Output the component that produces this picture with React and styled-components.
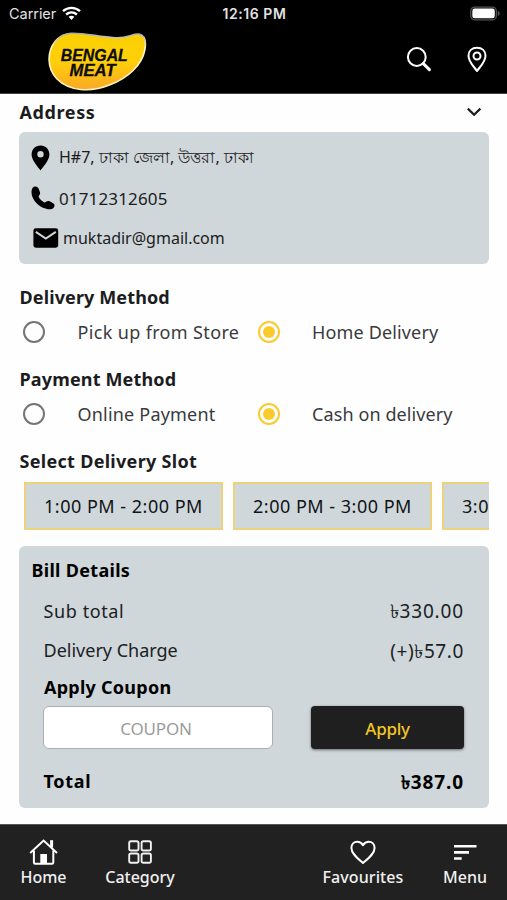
import React, { useState } from 'react';
import styled, { createGlobalStyle } from 'styled-components';

const GlobalStyle = createGlobalStyle`
  * { box-sizing: border-box; }
  body { margin: 0; background: #fff; }
  button, input { font-family: inherit; }
`;

const Screen = styled.div`
  display: flex;
  flex-direction: column;
  width: 100%;
  height: 100vh;
  overflow: hidden;
  background: #fefefe;
  color: #1c1c1e;
  font-family: 'Noto Sans', 'Open Sans', sans-serif;
  font-size: 18px;
`;

const StatusBar = styled.div`
  display: grid;
  grid-template-columns: 1fr auto 1fr;
  align-items: center;
  height: 27px;
  padding: 0 7px 0 9px;
  background: #000;
  color: #e2e2e2;
  font: 400 14.5px/27px Inter, sans-serif;
`;

const Carrier = styled.div`
  display: flex;
  align-items: center;
  gap: 6px;
  letter-spacing: -0.05px;
`;

const Clock = styled.div`
  font-weight: 600;
  font-size: 14px;
  letter-spacing: 0.55px;
`;

const BatterySlot = styled.div`
  display: flex;
  justify-content: flex-end;
`;

const Header = styled.header`
  display: flex;
  align-items: flex-start;
  height: 67px;
  padding: 4px 19px 0 47px;
  background: #000;
  border-bottom: 1px solid #444;
`;

const HeaderActions = styled.div`
  display: flex;
  gap: 34px;
  margin-left: auto;
  padding-top: 14px;
`;

const Main = styled.main`
  flex: 1;
  padding: 0 18px 0 19px;
`;

const Heading = styled.h2`
  margin: 0;
  padding-left: 0.5px;
  font-size: 18px;
  font-weight: 700;
  line-height: 36px;
  letter-spacing: ${(p) => p.$spacing || 0}px;
  white-space: nowrap;
`;

const AddressHeader = styled.div`
  display: flex;
  align-items: center;
  justify-content: space-between;
  height: 38px;
  padding: 0 7px 2px 0;
`;

const AddressCard = styled.section`
  height: 132px;
  padding: 6px 12px;
  border-radius: 6px;
  background: #cfd7da;
`;

const ContactRow = styled.div`
  display: flex;
  align-items: center;
  gap: ${(p) => p.$gap}px;
  height: 40px;
  padding-left: ${(p) => p.$indent || 0}px;
  font-size: ${(p) => p.$size || 16}px;
  letter-spacing: ${(p) => p.$spacing || 0}px;
  white-space: nowrap;
`;

const Group = styled.section`
  margin-top: ${(p) => p.$top}px;
`;

const OptionGrid = styled.div`
  display: grid;
  grid-template-columns: 234.5px 1fr;
  height: 35px;
  padding-bottom: 1px;
`;

const Option = styled.label`
  display: flex;
  align-items: center;
  gap: 32.5px;
  padding-left: 4px;
  color: #3a3a3c;
  letter-spacing: ${(p) => p.$spacing}px;
  white-space: nowrap;
`;

const Radio = styled.span`
  display: grid;
  place-items: center;
  flex: none;
  width: 22px;
  height: 22px;
  border: 2.4px solid ${(p) => (p.$on ? '#fbcb2e' : '#757575')};
  border-radius: 50%;

  &::after {
    content: '';
    width: 12px;
    height: 12px;
    border-radius: 50%;
    background: ${(p) => (p.$on ? '#fbcb2e' : 'transparent')};
  }
`;

const SlotStrip = styled.div`
  display: flex;
  gap: 10px;
  margin-top: 3px;
  padding-left: 5px;
  overflow: hidden;
`;

const Slot = styled.button`
  flex: none;
  width: 199px;
  height: 48px;
  padding: 0;
  border: 2px solid #ecd27c;
  background: #cfd7da;
  color: #101416;
  font-size: 18px;
  letter-spacing: 0.5px;
`;

const Bill = styled.section`
  height: 262px;
  margin-top: 16px;
  padding: 5.5px 25px 0 24.5px;
  border-radius: 6px;
  background: #cfd7da;
  color: #1b2023;
`;

const BillTitle = styled(Heading)`
  margin-left: -12.5px;
  color: #000;
`;

const BillRow = styled.div`
  display: flex;
  align-items: center;
  justify-content: space-between;
  height: ${(p) => p.$height}px;
  margin-top: ${(p) => p.$top || 0}px;
  color: ${(p) => (p.$strong ? '#000' : 'inherit')};
  font-weight: ${(p) => (p.$strong ? 700 : 400)};
`;

const Label = styled.span`
  letter-spacing: ${(p) => p.$spacing}px;
`;

const Amount = styled.span`
  padding-top: 5px;
  font-size: 19px;
  letter-spacing: ${(p) => p.$spacing}px;
`;

const CouponTitle = styled(Heading)`
  color: #000;
  line-height: 34px;
`;

const CouponForm = styled.div`
  display: flex;
  justify-content: space-between;
  height: 43px;
  margin-top: 2px;
`;

const CouponInput = styled.input`
  width: 230px;
  margin-left: -0.5px;
  padding: 2px 4px 0 0;
  border: 1.5px solid #a9aeb1;
  border-radius: 6px;
  outline: none;
  background: #fff;
  font-size: 17px;
  letter-spacing: -0.2px;
  text-align: center;

  &::placeholder { color: #9b9b9b; opacity: 1; }
`;

const ApplyButton = styled.button`
  width: 153px;
  padding: 2px 0 0;
  border: 0;
  border-radius: 4px;
  background: #1f1f1f;
  box-shadow: 0 1px 3px rgba(0, 0, 0, 0.5);
  color: #f3c625;
  font-size: 17px;
  font-weight: 500;
  letter-spacing: -0.3px;
`;

const NavBar = styled.nav`
  display: grid;
  grid-template-columns: 87px 106px 110px 120px 84px;
  height: 76px;
  padding-top: 12px;
  border-top: 1px solid #555;
  background: #212121;
`;

const NavItem = styled.a`
  display: flex;
  flex-direction: column;
  align-items: center;
  grid-column: ${(p) => p.$column};
  color: #f1f1f1;
  font-size: 16px;
  font-weight: 500;
  line-height: 21px;
  letter-spacing: ${(p) => p.$spacing || 0}px;

  svg { flex: none; height: 30px; }
`;

const Logo = () => (
  <svg width="100" height="61" viewBox="0 0 100 61" role="img" aria-label="Bengal Meat">
    <defs>
      <linearGradient id="gold" x1="0" y1="0" x2="0" y2="1">
        <stop offset="0" stopColor="#f8d000" />
        <stop offset="0.5" stopColor="#ffcf0a" />
        <stop offset="1" stopColor="#f9a825" />
      </linearGradient>
      <linearGradient id="rim" x1="0" y1="0" x2="0" y2="1">
        <stop offset="0" stopColor="#aaa" />
        <stop offset="0.25" stopColor="#fff4c8" />
        <stop offset="1" stopColor="#fff1bd" />
      </linearGradient>
    </defs>
    <path
      d="M24 2.2C38 1.8 51 5.7 68 6.8C82 7.6 85 2.2 92 3.1C98 4.4 99.3 11 97.8 19C95 34 81 47 63 53.8C43 62 22 60 10 48C-1 36.5 .5 20 8 10.5C12.5 5 17 2.5 24 2.2Z"
      fill="url(#gold)"
      stroke="url(#rim)"
      strokeWidth="1.6"
    />
    <g fill="#0d0d0d" stroke="#0d0d0d" strokeWidth=".3" fontFamily="'Liberation Sans', Arial, sans-serif" fontWeight="700" fontStyle="italic" fontSize="17">
      <text x="13.8" y="30" textLength="67" lengthAdjust="spacingAndGlyphs">BENGAL</text>
      <text x="22.6" y="44.6" textLength="46" lengthAdjust="spacingAndGlyphs">MEAT</text>
    </g>
  </svg>
);

const WifiIcon = () => (
  <svg width="19" height="15" viewBox="0 0 19 15" fill="none" stroke="#fff" strokeWidth="2.4">
    <path d="M1 5.2C6 .7 13 .7 18 5.2M4.1 8.5C7.3 5.7 11.7 5.7 14.9 8.5" />
    <path d="M6.6 10.8C8.3 9.3 10.7 9.3 12.4 10.8L9.5 13.9Z" fill="#fff" stroke="none" />
  </svg>
);

const BatteryIcon = () => (
  <svg width="30" height="15" viewBox="0 0 31 15">
    <rect x=".8" y=".8" width="26.4" height="13.2" rx="4" fill="none" stroke="#555" strokeWidth="1.3" />
    <rect x="2.4" y="2.4" width="23.2" height="10" rx="2.4" fill="#fff" />
    <path d="M28.7 5v5c1.5-.5 2-1.4 2-2.5s-.5-2-2-2.5Z" fill="#555" />
  </svg>
);

const SearchIcon = () => (
  <svg width="26" height="28" viewBox="0 0 26 28" fill="none" stroke="#fff">
    <circle cx="10.8" cy="12" r="8.9" strokeWidth="2" />
    <path d="M17.3 18.6L23.4 24.6" strokeWidth="3" strokeLinecap="round" />
  </svg>
);

const PlaceIcon = () => (
  <svg width="22" height="28" viewBox="0 0 22 28" fill="none" stroke="#fff" strokeWidth="2">
    <path d="M11 26C9 22.6 2.5 17.5 2.5 10.8C2.5 5.8 6 2.7 11 2.7S19.5 5.8 19.5 10.8C19.5 17.5 13 22.6 11 26Z" strokeLinejoin="round" />
    <circle cx="11" cy="11" r="3.5" />
  </svg>
);

const ChevronIcon = () => (
  <svg width="16" height="12" viewBox="0 0 16 12" fill="none" stroke="#1c1c1e" strokeWidth="2.2">
    <path d="M1.8 2.6L8.1 8.8L14.4 2.6" />
  </svg>
);

const PinIcon = () => (
  <svg width="19" height="26" viewBox="0 0 19 26">
    <path fillRule="evenodd" d="M9.5.4C4.2.4.6 4.3.6 9.4C.6 15.5 7.2 22 9.5 25.4C11.8 22 18.4 15.5 18.4 9.4C18.4 4.3 14.8.4 9.5.4ZM9.5 6a3.2 3.2 0 1 1 0 6.4a3.2 3.2 0 0 1 0-6.4Z" />
  </svg>
);

const PhoneIcon = () => (
  <svg width="24" height="24" viewBox="0 0 24 24">
    <path d="M.6 4.6C.9 2 2.4.6 4.2.5C6 .4 7.2 1.5 7.8 3L8.9 6C9.4 7.4 9 8.6 8.1 9.6C7.6 10.3 7.6 10.9 8 11.6C9.3 13.6 10.9 15.2 13 16.3C13.8 16.7 14.4 16.5 15 15.8C16.1 14.8 17.4 14.6 18.7 15.3L21.8 17C23.2 17.8 23.8 19 23.4 20.2C22.8 22 21.4 23.2 19.2 23.3C9.6 23.7-.6 13.6.6 4.6Z" />
  </svg>
);

const MailIcon = () => (
  <svg width="26" height="20" viewBox="0 0 26 20">
    <rect x=".4" y=".3" width="24.8" height="19.4" rx="2.4" />
    <path d="M2.8 3.8L12.8 10.5L22.8 3.8" fill="none" stroke="#cfd7da" strokeWidth="2" />
  </svg>
);

const HomeIcon = () => (
  <svg width="30" height="30" viewBox="0 0 30 30" fill="none" stroke="#fff" strokeWidth="2">
    <path d="M1.2 16L14.6 3.6L28 16" />
    <path d="M4.9 13.6V25.4Q4.9 26.7 6.2 26.7H23Q24.3 26.7 24.3 25.4V13.6" />
    <path d="M22.6 10.5V3.2" strokeWidth="3" />
    <path d="M11.3 26.7V17H18V26.7Z" fill="#fff" stroke="none" />
  </svg>
);

const CategoryIcon = () => (
  <svg width="26" height="30" viewBox="0 0 26 30" fill="none" stroke="#f1f1f1" strokeWidth="1.9">
    <rect x="2.2" y="4.2" width="9.3" height="9.3" rx="1.8" />
    <rect x="14.6" y="4.2" width="9.3" height="9.3" rx="1.8" />
    <rect x="2.2" y="16.5" width="9.3" height="9.3" rx="1.8" />
    <rect x="14.6" y="16.5" width="9.3" height="9.3" rx="1.8" />
  </svg>
);

const HeartIcon = () => (
  <svg width="28" height="30" viewBox="0 0 28 30" fill="none" stroke="#fff" strokeWidth="2" strokeLinejoin="round">
    <path d="M14 26C9 21.6 2.4 16.8 2.4 11C2.4 7.3 5 4.8 8.3 4.8C10.8 4.8 12.7 6.1 14 8.1C15.3 6.1 17.2 4.8 19.7 4.8C23 4.8 25.6 7.3 25.6 11C25.6 16.8 19 21.6 14 26Z" />
  </svg>
);

const MenuIcon = () => (
  <svg width="24" height="30" viewBox="0 0 24 30" stroke="#fff" strokeWidth="2.6">
    <path d="M1 9.3H23.5M1 15.4H16M1 21.5H8.7" />
  </svg>
);

const RadioOption = ({ label, spacing, selected, onSelect }) => (
  <Option $spacing={spacing} onClick={onSelect}>
    <Radio $on={selected} />
    {label}
  </Option>
);

const ChoiceGroup = ({ title, titleSpacing, top, options }) => {
  const [picked, setPicked] = useState(1);
  return (
    <Group $top={top}>
      <Heading $spacing={titleSpacing}>{title}</Heading>
      <OptionGrid>
        {options.map(([label, spacing], i) => (
          <RadioOption key={label} label={label} spacing={spacing} selected={picked === i} onSelect={() => setPicked(i)} />
        ))}
      </OptionGrid>
    </Group>
  );
};

const slots = ['1:00 PM - 2:00 PM', '2:00 PM - 3:00 PM', '3:00 PM - 4:00 PM'];

export default function App() {
  return (
    <Screen>
      <GlobalStyle />
      <StatusBar>
        <Carrier>Carrier <WifiIcon /></Carrier>
        <Clock>12:16 PM</Clock>
        <BatterySlot><BatteryIcon /></BatterySlot>
      </StatusBar>
      <Header>
        <Logo />
        <HeaderActions>
          <SearchIcon />
          <PlaceIcon />
        </HeaderActions>
      </Header>

      <Main>
        <AddressHeader>
          <Heading $spacing={0.6}>Address</Heading>
          <ChevronIcon />
        </AddressHeader>
        <AddressCard>
          <ContactRow $gap={9}><PinIcon />H#7, ঢাকা জেলা, উত্তরা, ঢাকা</ContactRow>
          <ContactRow $gap={4} $size={17} $spacing={0.15}><PhoneIcon />01712312605</ContactRow>
          <ContactRow $gap={4} $indent={2}><MailIcon />muktadir@gmail.com</ContactRow>
        </AddressCard>

        <ChoiceGroup
          title="Delivery Method"
          titleSpacing={0.12}
          top={14.5}
          options={[['Pick up from Store', 0.35], ['Home Delivery', 0.15]]}
        />
        <ChoiceGroup
          title="Payment Method"
          titleSpacing={0.15}
          top={11.5}
          options={[['Online Payment', 0.2], ['Cash on delivery', 0.1]]}
        />
        <Group $top={11}>
          <Heading $spacing={0.3}>Select Delivery Slot</Heading>
          <SlotStrip>
            {slots.map((slot) => <Slot key={slot}>{slot}</Slot>)}
          </SlotStrip>
        </Group>

        <Bill>
          <BillTitle $spacing={0.3}>Bill Details</BillTitle>
          <BillRow $height={40} $top={3}>
            <Label $spacing={0.6}>Sub total</Label>
            <Amount $spacing={0.85}>৳330.00</Amount>
          </BillRow>
          <BillRow $height={39}>
            <Label $spacing={0}>Delivery Charge</Label>
            <Amount $spacing={0.6}>(+)৳57.0</Amount>
          </BillRow>
          <CouponTitle $spacing={0.25}>Apply Coupon</CouponTitle>
          <CouponForm>
            <CouponInput placeholder="COUPON" />
            <ApplyButton>Apply</ApplyButton>
          </CouponForm>
          <BillRow $height={36} $top={14.5} $strong>
            <Label $spacing={0.7}>Total</Label>
            <Amount $spacing={0.9}>৳387.0</Amount>
          </BillRow>
        </Bill>
      </Main>

      <NavBar>
        <NavItem $column={1}><HomeIcon />Home</NavItem>
        <NavItem $column={2}><CategoryIcon />Category</NavItem>
        <NavItem $column={4} $spacing={0.1}><HeartIcon />Favourites</NavItem>
        <NavItem $column={5}><MenuIcon />Menu</NavItem>
      </NavBar>
    </Screen>
  );
}
